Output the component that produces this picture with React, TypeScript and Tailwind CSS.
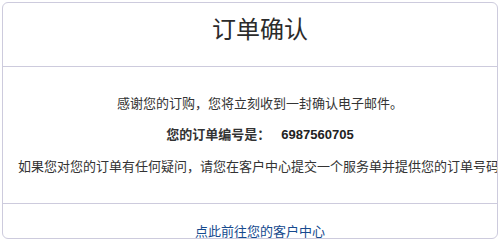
export default function App() {
  return (
    <div className="w-[500px] h-[240px] bg-white p-[2px] font-['Noto_Sans_CJK_SC',sans-serif] text-[#333]">
      <div className="h-[237px] w-[496px] border border-[#cdcbdd] rounded-[6px] overflow-hidden flex flex-col">
        <div className="h-[64px] shrink-0 border-b border-[#cdcbdd] pt-[11px] pl-[20px] text-center">
          <h1 className="text-[24px] leading-[28px] font-normal text-[#2b2b2b]">订单确认</h1>
        </div>

        <div className="h-[137px] shrink-0 border-b border-[#cdcbdd] pt-[20px] text-[13px] leading-[31px]">
          <p className="pl-[20px] text-center">感谢您的订购，您将立刻收到一封确认电子邮件。</p>
          <p className="pl-[20px] text-center">
            <span className="font-bold">您的订单编号是：</span>
            <span className="ml-[11px] font-bold font-['Liberation_Sans',sans-serif] text-[#222]">6987560705</span>
          </p>
          <p className="px-[15px] whitespace-nowrap">
            如果您对您的订单有任何疑问，请您在客户中心提交一个服务单并提供您的订单号码。
          </p>
        </div>

        <div className="pt-[17px] pl-[20px] text-center text-[13px] leading-[20px]">
          <a href="#" className="text-[#164a8e]">点此前往您的客户中心</a>
        </div>
      </div>
    </div>
  );
}
